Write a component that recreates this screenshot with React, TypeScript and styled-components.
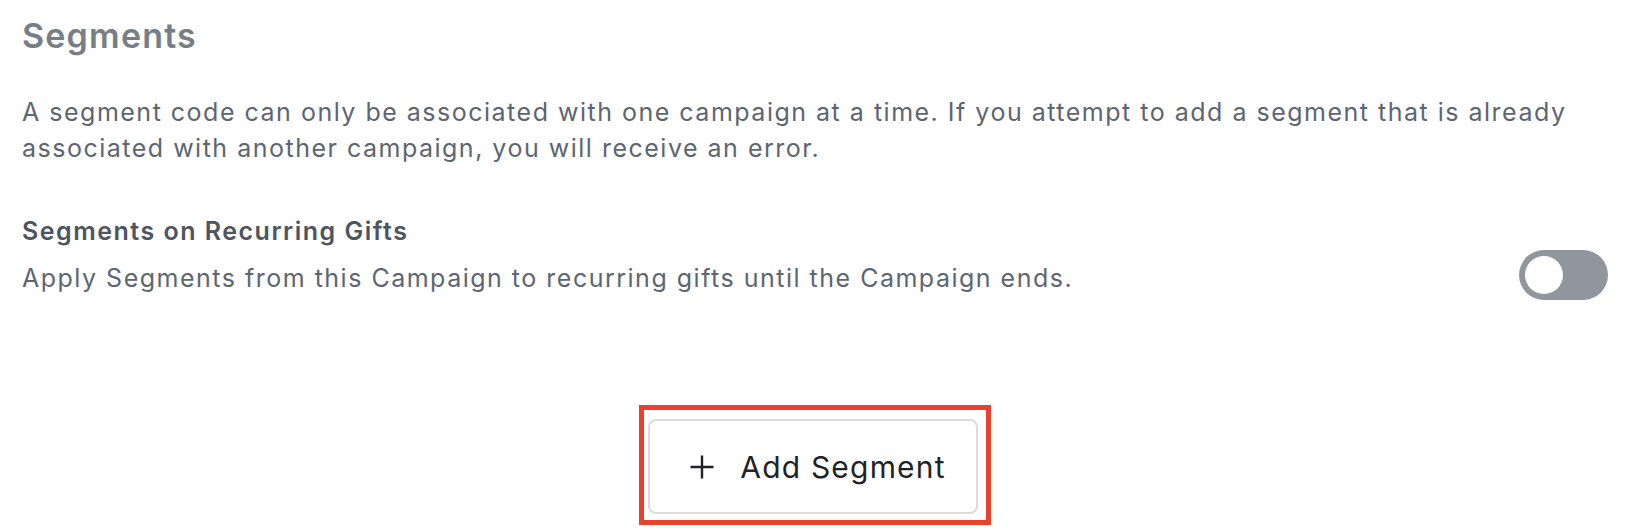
import React, { useState } from "react";
import styled, { createGlobalStyle } from "styled-components";

const GlobalStyle = createGlobalStyle`
  html, body {
    margin: 0;
    padding: 0;
    background: #ffffff;
  }
  body {
    font-family: Inter, "Noto Sans", "Liberation Sans", sans-serif;
    -webkit-font-smoothing: antialiased;
  }
  * { box-sizing: border-box; }
`;

const Page = styled.section`
  width: 1608px;
  padding: 16px 0 0 22px;
  display: flex;
  flex-direction: column;
`;

const Title = styled.h2`
  margin: 0;
  font-size: 34px;
  line-height: 40px;
  font-weight: 600;
  letter-spacing: 1.2px;
  color: #767e87;
`;

const Intro = styled.p`
  margin: 38px 0 0;
  font-size: 25px;
  line-height: 36px;
  font-weight: 400;
  letter-spacing: 1.5px;
  color: #5d6670;
`;

const SettingRow = styled.div`
  margin-top: 47px;
  display: flex;
  justify-content: space-between;
  align-items: flex-start;
`;

const SettingText = styled.div`
  display: flex;
  flex-direction: column;
  gap: 11px;
`;

const SettingLabel = styled.div`
  font-size: 25px;
  line-height: 36px;
  font-weight: 600;
  letter-spacing: 1.5px;
  color: #4d5660;
`;

const SettingHint = styled.div`
  font-size: 25px;
  line-height: 36px;
  font-weight: 400;
  letter-spacing: 1.5px;
  color: #5d6670;
`;

const SwitchTrack = styled.button<{ $on: boolean }>`
  margin-top: 37px;
  width: 89px;
  height: 50px;
  padding: 6px;
  border: none;
  border-radius: 25px;
  background: ${(p) => (p.$on ? "#2f6fde" : "#8f969e")};
  display: flex;
  justify-content: ${(p) => (p.$on ? "flex-end" : "flex-start")};
  align-items: center;
  cursor: pointer;
`;

const SwitchKnob = styled.span`
  width: 38px;
  height: 38px;
  border-radius: 50%;
  background: #ffffff;
`;

const ActionArea = styled.div`
  margin-top: 105px;
  display: flex;
  justify-content: center;
`;

const Highlight = styled.div`
  border: 5px solid #e8412c;
  padding: 9px 8px 6px 4px;
  display: flex;
`;

const AddButton = styled.button`
  width: 330px;
  height: 95px;
  padding: 0 0 0 10px;
  border: 2px solid #dcdcdc;
  border-radius: 8px;
  background: #ffffff;
  display: flex;
  align-items: center;
  justify-content: center;
  gap: 26px;
  font-family: Inter, "Noto Sans", "Liberation Sans", sans-serif;
  font-size: 30px;
  font-weight: 400;
  letter-spacing: 1.2px;
  color: #1f2328;
  cursor: pointer;
`;

const PlusIcon = () => (
  <svg width="24" height="24" viewBox="0 0 24 24" aria-hidden="true">
    <path d="M12 0.5v23M0.5 12h23" stroke="#1f2328" strokeWidth="2.4" fill="none" />
  </svg>
);

export default function App() {
  const [on, setOn] = useState(false);
  return (
    <>
      <GlobalStyle />
      <Page>
        <Title>Segments</Title>
        <Intro>
          A segment code can only be associated with one campaign at a time. If you attempt to add a segment that is
          already associated with another campaign, you will receive an error.
        </Intro>
        <SettingRow>
          <SettingText>
            <SettingLabel>Segments on Recurring Gifts</SettingLabel>
            <SettingHint>Apply Segments from this Campaign to recurring gifts until the Campaign ends.</SettingHint>
          </SettingText>
          <SwitchTrack $on={on} onClick={() => setOn(!on)} aria-pressed={on}>
            <SwitchKnob />
          </SwitchTrack>
        </SettingRow>
        <ActionArea>
          <Highlight>
            <AddButton>
              <PlusIcon />
              Add Segment
            </AddButton>
          </Highlight>
        </ActionArea>
      </Page>
    </>
  );
}
